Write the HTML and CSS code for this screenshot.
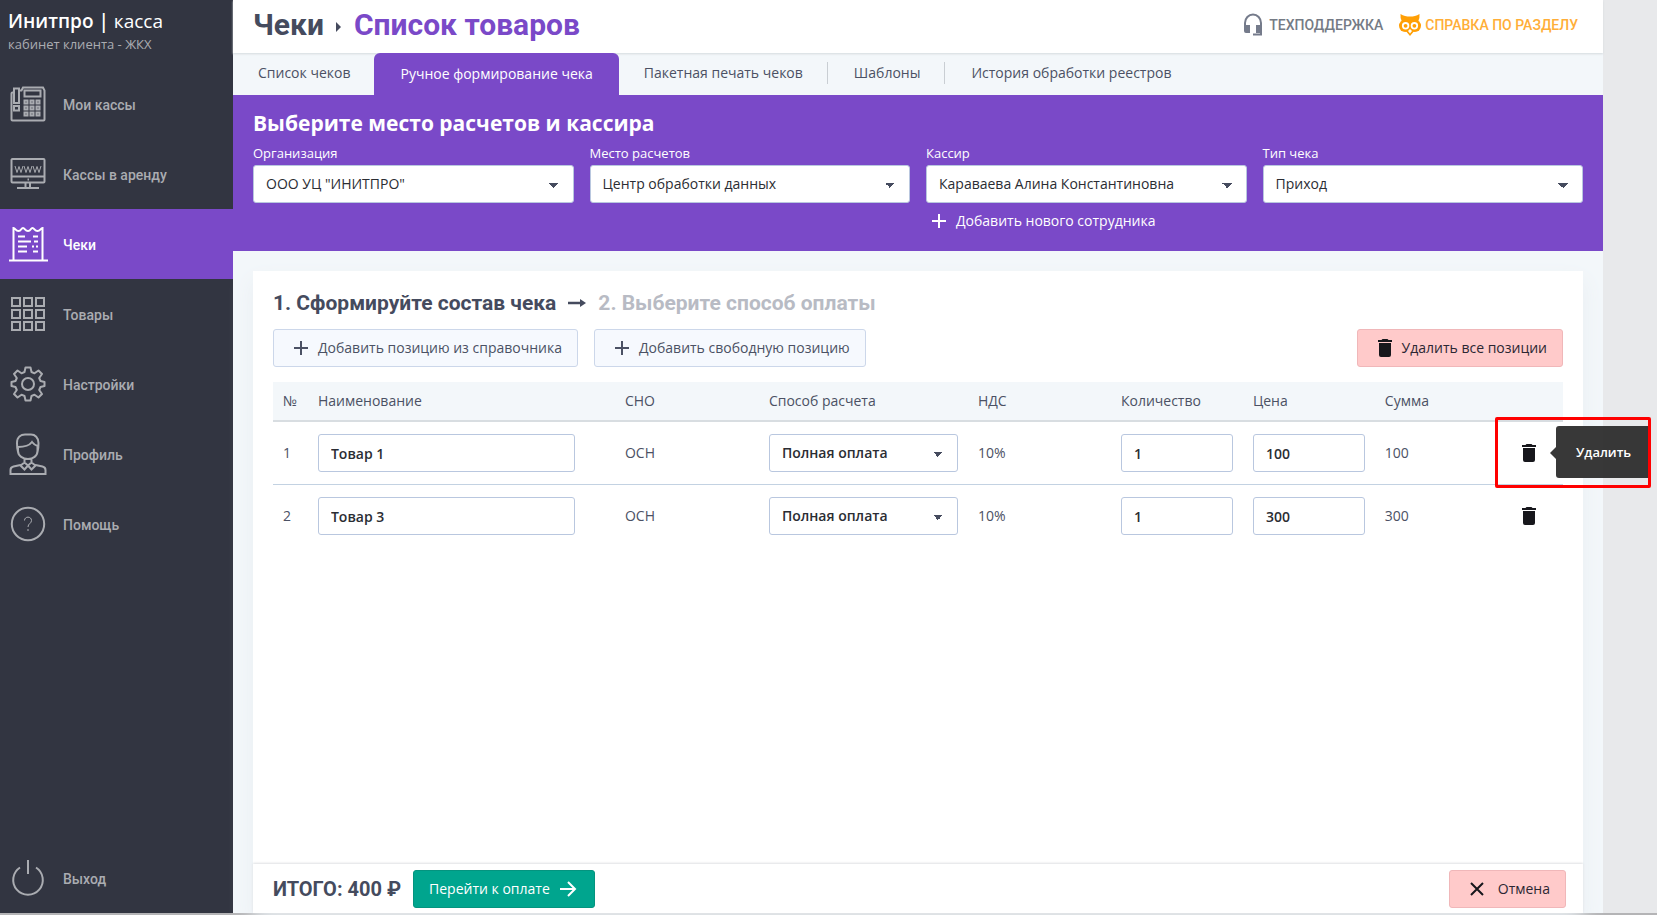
FILE: index.html
```html
<!DOCTYPE html>
<html lang="ru">
<head>
<meta charset="utf-8">
<title>Чеки — Список товаров</title>
<link rel="stylesheet" href="styles.css">
</head>
<body>
<div class="app">
  <aside class="sidebar">
    <div class="brand">
      <div class="brand-name"><b>Инитпро |</b> касса</div>
      <div class="brand-sub">кабинет клиента - ЖКХ</div>
    </div>
    <nav class="menu">
      <a class="menu-item" href="#">
        <svg class="menu-icon" viewBox="0 0 36 36"><path d="M4 6.500h-1.500a1 1 0 0 0-1 1v26a1 1 0 0 0 1 1h31a1 1 0 0 0 1-1v-29l-1.500-3h-20l-1.500 3h-1.500M4 2.500h5v14.500h-5zM4 20h5v4.500h-5zM14.500 4.500h16v6h-16zM14.500 14.500h3v3h-3zM20.500 14.500h3v3h-3zM26.500 14.500h3v3h-3zM14.500 20.500h3v3h-3zM20.500 20.500h3v3h-3zM26.500 20.500h3v3h-3zM14.500 26.500h3v3h-3zM20.500 26.500h3v3h-3zM26.500 26.500h3v3h-3z"/></svg>
        <span>Мои кассы</span>
      </a>
      <a class="menu-item" href="#">
        <svg class="menu-icon" viewBox="0 0 36 36"><path d="M2.500 3h31a1 1 0 0 1 1 1v21.500a1 1 0 0 1-1 1h-31a1 1 0 0 1-1-1v-21.500a1 1 0 0 1 1-1zM1.500 20.500h33M17.500 23.500h1.500M15.500 27v4M20 27v4M7 32h22"/><path class="thin" d="M5 10l2 6.500 2-6 2 6 2-6.500M14 10l2 6.500 2-6 2 6 2-6.500M23 10l2 6.500 2-6 2 6 2-6.500"/></svg>
        <span>Кассы в аренду</span>
      </a>
      <a class="menu-item active" href="#">
        <svg class="menu-icon" viewBox="0 0 36 36"><path d="M3.500 34v-32c2 0 2 3 5 3s2.500-3 4.500-3 2 3 5 3 2.500-3 4.500-3 2 3 5 3 3-3 5-3v32M-1 34.500h39M8 10.500h7M8 15.500h13M8 20.500h9M8 25.500h9M23 10.500h5M24 15.500h4M22 20.500h2M26 20.500h2M23 25.500h5"/></svg>
        <span>Чеки</span>
      </a>
      <a class="menu-item" href="#">
        <svg class="menu-icon" viewBox="0 0 36 36"><path d="M2 2h8v8h-8zM14 2h8v8h-8zM26 2h8v8h-8zM2 14h8v8h-8zM14 14h8v8h-8zM26 14h8v8h-8zM2 26h8v8h-8zM14 26h8v8h-8zM26 26h8v8h-8z"/></svg>
        <span>Товары</span>
      </a>
      <a class="menu-item" href="#">
        <svg class="menu-icon" viewBox="0 0 36 36"><path stroke-linejoin="round" d="M15.500 1.500h5l1 4.500 3 1.300 4-2.800 3.500 3.500-2.800 4 1.300 3 4 1v4l-4 1-1.300 3 2.800 4-3.500 3.500-4-2.800-3 1.300-1 4.500h-5l-1-4.500-3-1.300-4 2.800-3.500-3.500 2.800-4-1.300-3-4-1v-4l4-1 1.300-3-2.800-4 3.500-3.500 4 2.800 3-1.300z"/><circle cx="18" cy="18" r="6"/></svg>
        <span>Настройки</span>
      </a>
      <a class="menu-item" href="#">
        <svg class="menu-icon tall" viewBox="0 0 36 42"><path d="M8 19c-1-3-1-6-1-9 0-6 4-8.500 8-8.500h6c4 0 7.500 3 7.500 8.500 0 3 0 6-1 9M8 14c6 0 11-1 14-5 1.500 2 3 3 5.500 4M8 14v4c0 5 5 8 10 8s9.500-3 9.500-8v-5M14.500 25.500v4l-4 3 4 4 3.500-4 3.500 4 4-4-4-3v-4M14.500 29.500l3.500 3 3.500-3M10.500 32l-7 1.500c-2 .5-3 1.500-3 3.500v4h35v-4c0-2-1-3-3-3.500l-7-1.500"/></svg>
        <span>Профиль</span>
      </a>
      <a class="menu-item" href="#">
        <svg class="menu-icon" viewBox="0 0 36 36"><circle cx="18" cy="18" r="16.200"/><path class="thin" d="M14.500 14.500c0-4.500 7-4.500 7 0 0 3-3.500 3-3.500 6.500M18 23v2"/></svg>
        <span>Помощь</span>
      </a>
      <a class="menu-item exit" href="#">
        <svg class="menu-icon" viewBox="0 0 36 36"><path d="M18 0v14M10 7.500a14.800 14.800 0 1 0 16 0"/></svg>
        <span>Выход</span>
      </a>
    </nav>
  </aside>

  <main class="main">
    <header class="topbar">
      <h1 class="crumbs"><span>Чеки</span><svg class="crumb-arrow" viewBox="0 0 6 10"><path d="M0 0l5 5-5 5z"/></svg><span class="current">Список товаров</span></h1>
      <div class="help">
        <a class="help-link" href="#">
          <svg class="headset" viewBox="0 0 20 24"><path class="band" d="M2 14v-4a7.500 8 0 0 1 16 0v11.500h-8"/><path class="cups" d="M1 12h6v8h-4a2 2 0 0 1-2-2zM13 12h6v8h-6z"/></svg>
          ТЕХПОДДЕРЖКА
        </a>
        <a class="help-link owl-link" href="#">
          <svg class="owl" viewBox="0 0 22 22"><path class="head" d="M1.500 0c3 2 6 2.500 9.500 2.500s6.500-.5 9.500-2.500q.5 4-1.500 8h-16q-2-4-1.500-8zM6 16h10l-5 6z"/><circle class="head" cx="6.200" cy="11.800" r="6.200"/><circle class="head" cx="15.800" cy="11.800" r="6.200"/><circle class="eye" cx="6.600" cy="11.800" r="3.700"/><circle class="eye" cx="15.400" cy="11.800" r="3.700"/><circle class="head" cx="6.600" cy="11.800" r="1.900"/><circle class="head" cx="15.400" cy="11.800" r="1.900"/><path class="eye" d="M11 15l2 2-2 2.500-2-2.500z"/></svg>
          СПРАВКА ПО РАЗДЕЛУ
        </a>
      </div>
    </header>

    <nav class="tabs">
      <a class="tab" href="#">Список чеков</a>
      <a class="tab selected" href="#">Ручное формирование чека</a>
      <a class="tab" href="#">Пакетная печать чеков</a>
      <a class="tab divided" href="#">Шаблоны</a>
      <a class="tab divided" href="#">История обработки реестров</a>
    </nav>

    <section class="place">
      <h2 class="place-title">Выберите место расчетов и кассира</h2>
      <div class="fields">
        <div class="field">
          <label for="org">Организация</label>
          <select class="select" id="org"><option>ООО УЦ "ИНИТПРО"</option></select>
        </div>
        <div class="field">
          <label for="point">Место расчетов</label>
          <select class="select" id="point"><option>Центр обработки данных</option></select>
        </div>
        <div class="field">
          <label for="cashier">Кассир</label>
          <select class="select" id="cashier"><option>Караваева Алина Константиновна</option></select>
          <button class="add-person" type="button"><svg class="plus" viewBox="0 0 14 14"><path d="M7 0v14M0 7h14"/></svg>Добавить нового сотрудника</button>
        </div>
        <div class="field">
          <label for="kind">Тип чека</label>
          <select class="select" id="kind"><option>Приход</option></select>
        </div>
      </div>
    </section>

    <section class="card">
      <div class="card-body">
        <h2 class="steps"><span>1. Сформируйте состав чека</span><svg class="step-arrow" viewBox="0 0 18 8"><path d="M0 2.700h12v-2.700l6 4-6 4v-2.700h-12z"/></svg><span class="next">2. Выберите способ оплаты</span></h2>
        <div class="toolbar">
          <button class="btn" type="button"><svg class="plus" viewBox="0 0 14 14"><path d="M7 0v14M0 7h14"/></svg>Добавить позицию из справочника</button>
          <button class="btn" type="button"><svg class="plus" viewBox="0 0 14 14"><path d="M7 0v14M0 7h14"/></svg>Добавить свободную позицию</button>
          <button class="btn danger push" type="button"><svg class="trash" viewBox="0 0 14 18"><path d="M0 1h3.500l1-1h5l1 1h3.500v2h-14zM1 4h12v12a2 2 0 0 1-2 2h-8a2 2 0 0 1-2-2z"/></svg>Удалить все позиции</button>
        </div>
        <table class="items">
          <colgroup><col class="c-num"><col class="c-name"><col class="c-tax"><col class="c-pay"><col class="c-vat"><col class="c-qty"><col class="c-price"><col class="c-sum"></colgroup>
          <thead>
            <tr><th>№</th><th>Наименование</th><th>СНО</th><th>Способ расчета</th><th>НДС</th><th>Количество</th><th>Цена</th><th>Сумма</th></tr>
          </thead>
          <tbody>
            <tr>
              <td>1</td>
              <td class="name"><input class="input" type="text" aria-label="Наименование" value="Товар 1"></td>
              <td>ОСН</td>
              <td><select class="select" aria-label="Способ расчета"><option>Полная оплата</option></select></td>
              <td>10%</td>
              <td><input class="input" type="text" aria-label="Количество" value="1"></td>
              <td><input class="input" type="text" aria-label="Цена" value="100"></td>
              <td>
                <div class="sum">100
                  <div class="remove">
                    <button class="icon-btn" type="button" aria-label="Удалить"><svg class="trash" viewBox="0 0 14 18"><path d="M0 1h3.500l1-1h5l1 1h3.500v2h-14zM1 4h12v12a2 2 0 0 1-2 2h-8a2 2 0 0 1-2-2z"/></svg></button>
                    <div class="tooltip" role="tooltip">Удалить</div>
                    <div class="highlight"></div>
                  </div>
                </div>
              </td>
            </tr>
            <tr>
              <td>2</td>
              <td class="name"><input class="input" type="text" aria-label="Наименование" value="Товар 3"></td>
              <td>ОСН</td>
              <td><select class="select" aria-label="Способ расчета"><option>Полная оплата</option></select></td>
              <td>10%</td>
              <td><input class="input" type="text" aria-label="Количество" value="1"></td>
              <td><input class="input" type="text" aria-label="Цена" value="300"></td>
              <td>
                <div class="sum">300
                  <div class="remove">
                    <button class="icon-btn" type="button" aria-label="Удалить"><svg class="trash" viewBox="0 0 14 18"><path d="M0 1h3.500l1-1h5l1 1h3.500v2h-14zM1 4h12v12a2 2 0 0 1-2 2h-8a2 2 0 0 1-2-2z"/></svg></button>
                  </div>
                </div>
              </td>
            </tr>
          </tbody>
        </table>
      </div>
      <footer class="card-footer">
        <div class="total">ИТОГО: 400 ₽</div>
        <button class="btn primary" type="button">Перейти к оплате<svg class="go" viewBox="0 0 16 16"><path d="M0 8h15M8 1l7 7-7 7"/></svg></button>
        <button class="btn danger cancel push" type="button"><svg class="cross" viewBox="0 0 14 14"><path d="M1 1l12 12M13 1l-12 12"/></svg>Отмена</button>
      </footer>
    </section>
  </main>
</div>
</body>
</html>
```

FILE: styles.css
```css
* { box-sizing: border-box; }

body {
  margin: 0;
  background: #e8e9eb;
  color: #4b5164;
  font: 14px/20px "Open Sans", "Noto Sans", sans-serif;
}

h1, h2 { margin: 0; }
a { color: inherit; text-decoration: none; }
button, input, select { font: inherit; color: inherit; margin: 0; }
svg { display: block; flex: none; overflow: visible; }

.app {
  display: flex;
  min-height: 100vh;
  padding-right: 54px;
  border-bottom: 2px solid #b4b4b6;
}

/* Sidebar */
.sidebar {
  display: flex;
  flex-direction: column;
  flex: none;
  width: 233px;
  background: #323541;
  color: #aaacb1;
}
.brand { height: 69px; padding: 7px 8px; }
.brand-name { font: 19px/28px "Open Sans", sans-serif; color: #fff; }
.brand-name b { font-weight: 600; }
.brand-sub { font-size: 13px; line-height: 18px; }
.menu { display: flex; flex-direction: column; flex: 1; }
.menu-item {
  display: flex;
  align-items: center;
  gap: 17px;
  height: 70px;
  padding-left: 10px;
  font: 500 14px/20px Roboto, sans-serif;
}
.menu-item span { padding-top: 2px; }
.menu-item.active { background: #7a49c8; color: #fff; }
.menu-item.exit { margin-top: auto; }
.menu-icon { width: 36px; height: 36px; fill: none; stroke: currentColor; stroke-width: 2; }
.menu-icon.tall { height: 42px; }
.menu-icon .thin { stroke-width: 1; }

/* Header */
.main { display: flex; flex-direction: column; flex: 1; min-width: 0; background: #f3f7fa; }
.topbar {
  display: flex;
  align-items: center;
  justify-content: space-between;
  height: 53px;
  padding: 0 25px 4px 20px;
  background: #fff;
  box-shadow: 0 1px 2px #d5dade;
  z-index: 1;
}
.crumbs { display: flex; align-items: center; font: 700 30px/40px Roboto, sans-serif; color: #454b5e; }
.crumb-arrow { width: 6px; height: 10px; margin: 4px 12px 0; fill: #454b5e; }
.current { color: #7a49c8; }
.help { display: flex; gap: 16px; font: 500 14px/20px Roboto, sans-serif; color: #757b85; }
.help-link { display: flex; align-items: center; gap: 6px; }
.owl-link { gap: 4px; color: #ffae38; }
.headset { width: 20px; height: 24px; }
.headset .band { fill: none; stroke: #757b8b; stroke-width: 2; }
.headset .cups { fill: #757b8b; }
.owl { width: 22px; height: 22px; }
.owl .head { fill: #ff9f05; }
.owl .eye { fill: #fff; }

/* Tabs */
.tabs { display: flex; height: 42px; position: relative; z-index: 2; }
.tab { display: flex; align-items: center; padding: 0 24px 2px 25px; }
.tab.selected { padding: 0 26px; background: #7a49c8; color: #fff; border-radius: 6px 6px 0 0; }
.tab.divided { padding-left: 0; }
.tab.divided::before {
  content: "";
  width: 1px;
  height: 22px;
  margin-right: 26px;
  background: #c9ced3;
}

/* Place and cashier */
.place { height: 156px; padding: 14px 20px; background: #7a49c8; color: #fff; }
.place-title { font: 700 21px/28px "Open Sans", sans-serif; }
.fields { display: grid; grid-template-columns: repeat(4, 1fr); gap: 16px; margin-top: 7px; }
.field { display: flex; flex-direction: column; align-items: flex-start; }
.field label { font-size: 13px; line-height: 18px; margin-bottom: 3px; }
.add-person {
  display: flex;
  align-items: center;
  gap: 10px;
  height: 36px;
  padding: 0 6px;
  border: 0;
  background: none;
}
.plus { width: 14px; height: 14px; fill: none; stroke: currentColor; stroke-width: 2; }

.select, .input {
  width: 100%;
  height: 38px;
  padding: 0 12px;
  border: 1px solid #b9c7df;
  border-radius: 3px;
  background-color: #fff;
  color: #2b2d33;
  font-weight: 600;
  outline: 0;
}
.select {
  appearance: none;
  background-image:
    linear-gradient(to bottom right, #454b5e 50%, transparent 50%),
    linear-gradient(to bottom left, #454b5e 50%, transparent 50%);
  background-size: 5px 5px;
  background-position: right 14px top 17px, right 19px top 17px;
  background-repeat: no-repeat;
}
.place .select { font-weight: 500; }

/* Receipt card */
.card {
  display: flex;
  flex-direction: column;
  flex: 1;
  margin: 20px 20px 0;
  background: #fff;
  box-shadow: 0 10px 20px #e9eef2;
}
.card-body { flex: 1; padding: 18px 20px; }
.steps { display: flex; align-items: center; gap: 12px; font: 700 21px/28px Roboto, sans-serif; color: #454b5e; }
.step-arrow { width: 18px; height: 8px; fill: #454b5e; }
.next { color: #b8bbc4; }
.toolbar { display: flex; gap: 16px; margin: 12px 0 15px; }
.push { margin-left: auto; }
.btn {
  display: flex;
  align-items: center;
  gap: 10px;
  height: 38px;
  padding: 0 15px 0 20px;
  border: 1px solid #ccd7ea;
  border-radius: 3px;
  background: #f6f9fe;
}
.btn.danger { border-color: #f0b7b9; background: #ffcaca; color: #2b2733; }
.btn.danger.cancel { gap: 14px; }
.btn.primary { padding: 0 18px 0 15px; border-color: #04947f; background: #00a58e; color: #fff; }
.trash { width: 14px; height: 18px; fill: #17171c; }
.go { width: 16px; height: 16px; fill: none; stroke: #fff; stroke-width: 2; }
.cross { width: 14px; height: 14px; fill: none; stroke: #17171c; stroke-width: 2; }

.items { width: 100%; table-layout: fixed; border-collapse: separate; border-spacing: 0; }
.items th {
  height: 40px;
  padding: 0 10px;
  background: #f3f7fa;
  border-bottom: 2px solid #d8dde1;
  font-weight: 400;
  text-align: left;
}
.items td { height: 63px; padding: 0 10px; border-bottom: 1px solid #c3d2e2; }
.items tr:last-child td { border-bottom-color: transparent; }
.items td.name { padding-right: 40px; }
.c-num { width: 2.71%; }
.c-name { width: 23.8%; }
.c-tax { width: 11.16%; }
.c-pay { width: 16.2%; }
.c-vat { width: 11.09%; }
.c-qty, .c-price { width: 10.23%; }

.sum { display: flex; align-items: center; justify-content: space-between; }
.remove { position: relative; margin-right: 7px; }
.icon-btn { display: grid; place-items: center; width: 34px; height: 34px; padding: 0; border: 0; background: none; }
.tooltip {
  position: absolute;
  left: 44px;
  top: -10px;
  padding: 16px 20px;
  border-radius: 3px;
  background: rgba(45, 45, 45, .95);
  color: #fff;
  font: 600 13px/20px "Open Sans", sans-serif;
}
.tooltip::before {
  content: "";
  position: absolute;
  left: -6px;
  top: 21px;
  border: 6px solid transparent;
  border-left: 0;
  border-right-color: rgba(45, 45, 45, .95);
}
.highlight {
  position: absolute;
  left: -17px;
  top: -19px;
  width: 156px;
  height: 71px;
  border: 3px solid #f00;
  border-radius: 2px;
  pointer-events: none;
}

.card-footer {
  display: flex;
  align-items: center;
  gap: 12px;
  height: 49px;
  padding: 0 17px 0 20px;
  box-shadow: 0 -1px 2px #dfe1e4;
}
.total { font: 700 20px/28px Roboto, sans-serif; color: #454b5e; }
```
